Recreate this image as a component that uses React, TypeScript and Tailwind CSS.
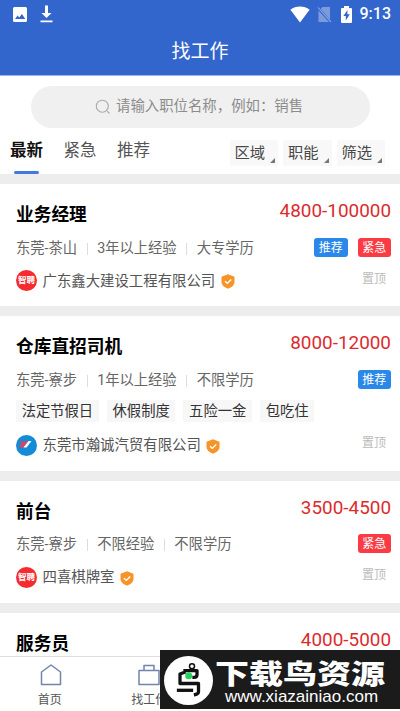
import type { ReactNode } from "react";

type Job = {
  title: string;
  salary: string;
  meta: string[];
  badges: string[];
  benefits?: string[];
  company: string;
  logo: "zhipin" | "hancheng";
};

const tabs = ["最新", "紧急", "推荐"];
const filters = ["区域", "职能", "筛选"];

const jobs: Job[] = [
  {
    title: "业务经理",
    salary: "4800-100000",
    meta: ["东莞-茶山", "3年以上经验", "大专学历"],
    badges: ["推荐", "紧急"],
    company: "广东鑫大建设工程有限公司",
    logo: "zhipin"
  },
  {
    title: "仓库直招司机",
    salary: "8000-12000",
    meta: ["东莞-寮步", "1年以上经验", "不限学历"],
    badges: ["推荐"],
    benefits: ["法定节假日", "休假制度", "五险一金", "包吃住"],
    company: "东莞市瀚诚汽贸有限公司",
    logo: "hancheng"
  },
  {
    title: "前台",
    salary: "3500-4500",
    meta: ["东莞-寮步", "不限经验", "不限学历"],
    badges: ["紧急"],
    company: "四喜棋牌室",
    logo: "zhipin"
  }
];

function StatusBar() {
  return (
    <div className="flex h-[28px] items-center justify-between pl-[13px] pr-[9px]">
      <div className="flex items-center gap-[13px]">
        <svg width="14" height="15" viewBox="0 0 14 15">
          <rect width="14" height="15" rx="1.5" fill="#fff" />
          <path d="M2 12l2.6-3.6 1.7 2L8.900 7l3.400 5z" fill="#3366cc" />
        </svg>
        <svg width="13" height="18" viewBox="0 0 13 18" fill="#fff">
          <path d="M5 .5h3V8h3.500l-5 5-5-5H5zM.5 15.500h12v1.700H.5z" />
        </svg>
      </div>
      <div className="flex items-center text-white">
        <svg width="20" height="17" viewBox="0 0 20 17">
          <path d="M10 16.500L.4 3.700C3.200 1.500 6.500.5 10 .5s6.800 1 9.600 3.200z" fill="#fff" />
        </svg>
        <svg className="ml-[7px]" width="15" height="17" viewBox="0 0 15 17">
          <path d="M5.500 1H13v12.500L3.700 3zM1.500 4.500L12 16H1.500z" fill="#7b9bdd" />
          <path d="M1 1.500l13 14.300" stroke="#8eaae2" strokeWidth="1.100" />
        </svg>
        <svg className="ml-[9px]" width="11" height="17" viewBox="0 0 11 17">
          <path d="M3 0h5v2h2q1 0 1 1v13q0 1-1 1H1q-1 0-1-1V3q0-1 1-1h2z" fill="#fff" />
          <path d="M6.400 4L2.400 10h2.400v4.500l4-6.200H6.400z" fill="#3366cc" />
        </svg>
        <span className="ml-[8px] text-[16px] font-medium leading-[20px]">9:13</span>
      </div>
    </div>
  );
}

function SearchBox() {
  return (
    <div className="ml-[31px] mr-[30px] mt-[10px] flex h-[42px] items-center rounded-full bg-[#f0f0f0] pl-[64px] text-[14.400px] text-[#8c8c8c]">
      <svg width="16" height="16" viewBox="0 0 16 16" fill="none" stroke="#aaa" strokeWidth="1.100">
        <circle cx="7.300" cy="7.200" r="6" />
        <path d="M12.200 12.200l2.300 2.300" />
      </svg>
      <span className="-mt-[1px] ml-[5px] whitespace-nowrap">请输入职位名称，例如：销售</span>
    </div>
  );
}

function FilterBar() {
  return (
    <div className="flex h-[46px] justify-between pl-[10px] pr-[15px]">
      <div className="flex gap-[20.500px] text-[16.500px] text-[#555]">
        {tabs.map((tab, index) => (
          <div key={tab} className="flex flex-col items-center">
            <span className={index === 0 ? "h-[43px] pt-[11px] leading-[24px] font-bold text-[#111]" : "h-[43px] pt-[11px] leading-[24px]"}>
              {tab}
            </span>
            {index === 0 && <span className="h-[3px] w-[25px] rounded-full bg-[#4478e0]" />}
          </div>
        ))}
      </div>
      <div className="flex gap-[5px] pt-[12px]">
        {filters.map((filter) => (
          <button key={filter} className="flex h-[26px] w-[48.500px] items-end rounded-xs bg-[#f8f8f8] pb-[3px] pl-[5px] text-[15.300px] text-[#484848]">
            <span className="h-[22px] leading-[25px]">{filter}</span>
            <svg className="ml-[5px] shrink-0" width="5" height="5" viewBox="0 0 5 5">
              <path d="M5 0v5H0z" fill="#777" />
            </svg>
          </button>
        ))}
      </div>
    </div>
  );
}

function CompanyLogo({ logo }: { logo: Job["logo"] }) {
  if (logo === "zhipin") {
    return (
      <span className="flex h-[21px] w-[21px] items-center justify-center rounded-full bg-[#f52b2f] text-[8.500px] font-bold leading-none text-white">
        智聘
      </span>
    );
  }
  return (
    <svg width="21" height="21" viewBox="0 0 21 21">
      <circle cx="10.500" cy="10.500" r="10.500" fill="#138bd6" />
      <path d="M4 5l3.500 2L12 5.500 8.500 12.500H2.500L5.500 9z" fill="#d94464" />
      <path d="M12.500 6H15.500l-5 6.500H7.500z" fill="#fff" />
    </svg>
  );
}

function VerifiedIcon() {
  return (
    <svg className="ml-[5.500px] mt-[2px]" width="14" height="15" viewBox="0 0 14 15">
      <path d="M7 .3l6.500 2.400v5.100c0 3.300-2.700 5.500-6.500 6.900C3.200 13.300.5 11.100.5 7.800V2.700z" fill="#f69429" />
      <path d="M4 7.200l2.300 2.200L10.200 5.600" fill="none" stroke="#fff" strokeWidth="1.400" />
    </svg>
  );
}

function JobHead({ title, salary }: { title: string; salary: string }) {
  return (
    <div className="flex h-[42px] justify-between">
      <h2 className="pt-[18px] text-[17.700px] font-bold leading-[26px] text-black">{title}</h2>
      <span className="pt-[14px] text-[18.900px] leading-[26px] text-[#dc2b2e]">{salary}</span>
    </div>
  );
}

function JobCard({ job }: { job: Job }) {
  return (
    <article className={job.benefits ? "h-[164.500px] shrink-0 border-b-10 border-[#ededed] pl-4 pr-[9px]" : "h-[132px] shrink-0 border-b-10 border-[#ededed] pl-4 pr-[9px]"}>
      <JobHead title={job.title} salary={job.salary} />
      <div className="flex h-[42px] items-center justify-between">
        <div className="flex items-center pt-[3px] text-[14.300px] text-[#666]">
          {job.meta.map((item, index) => (
            <span key={item} className="flex items-center whitespace-nowrap">
              {index > 0 && <i className="mx-[9.500px] h-[12px] w-px bg-[#ddd]" />}
              {item}
            </span>
          ))}
        </div>
        <div className="flex gap-[10px]">
          {job.badges.map((badge) => (
            <span
              key={badge}
              className={
                badge === "推荐"
                  ? "flex h-[19px] w-[33.500px] items-center justify-center rounded-[3px] bg-[#2a88e8] pt-px text-[12px] text-white"
                  : "flex h-[19px] w-[33.500px] items-center justify-center rounded-[3px] bg-[#fb3b44] pt-px text-[12px] text-white"
              }
            >
              {badge}
            </span>
          ))}
        </div>
      </div>
      {job.benefits && (
        <div className="flex h-[32.500px] gap-[8px] text-[14.300px] text-[#333]">
          {job.benefits.map((benefit) => (
            <span key={benefit} className="h-[22px] whitespace-nowrap bg-[#f7f7f7] px-[5.700px] leading-[22px]">
              {benefit}
            </span>
          ))}
        </div>
      )}
      <div className="flex h-[25px] items-center">
        <CompanyLogo logo={job.logo} />
        <span className="ml-[5.500px] pt-[2px] text-[14.400px] text-[#555]">{job.company}</span>
        <VerifiedIcon />
        <span className="mb-[4px] ml-auto mr-[5px] text-[12px] text-[#bbb]">置顶</span>
      </div>
    </article>
  );
}

function NavItem({ label, children }: { label: string; children: ReactNode }) {
  return (
    <div className="flex w-[99.500px] flex-col items-center pt-[6px] text-[12px] leading-[18px] text-[#555]">
      <svg width="24" height="24" viewBox="0 0 24 24" fill="none" stroke="#7384aa" strokeWidth="1.500" strokeLinejoin="round">
        {children}
      </svg>
      <span className="mt-[4px]">{label}</span>
    </div>
  );
}

function SiteBanner() {
  return (
    <div className="absolute bottom-[2px] right-0 flex h-[59px] w-[240px] items-start bg-[#1b1b1b] pl-[4px] text-white">
      <svg className="mt-[6px] shrink-0" width="49" height="49" viewBox="0 0 49 49" fill="none">
        <circle cx="24.500" cy="24.500" r="24.500" fill="#fff" />
        <circle cx="28" cy="10.300" r="2.500" stroke="#111" strokeWidth="1.500" />
        <g stroke="#111" strokeWidth="3.300" strokeLinecap="square" strokeLinejoin="round">
          <path d="M21 14.700h12v4q0 2.600-3 2.600M20 16.500l-4 1.500v9.500h18.500v8q0 2.500-3 3" />
          <path d="M14.500 34.300h13" />
        </g>
        <circle cx="24.700" cy="19.700" r="3.500" fill="#25d35d" />
      </svg>
      <div className="ml-[2px] flex flex-col pt-[11px]">
        <span className="h-[27px] w-[135px] origin-left scale-x-[1.26] whitespace-nowrap text-[27px] font-black leading-[28px]">下载鸟资源</span>
        <span className="ml-[10px] h-[18px] font-['Liberation_Sans'] text-[17px] leading-[18px]">www.xiazainiao.com</span>
      </div>
    </div>
  );
}

export default function App() {
  return (
    <main className="relative flex h-[711px] w-[400px] flex-col overflow-hidden bg-white font-[Roboto,'Noto_Sans_CJK_SC',sans-serif]">
      <header className="h-[76px] shrink-0 border-b border-[#9cb4e4] bg-[#3366cc]">
        <StatusBar />
        <h1 className="pt-[10px] text-center text-[19px] leading-[27px] text-white">找工作</h1>
      </header>
      <section className="h-[108px] shrink-0 border-b-10 border-[#ededed]">
        <SearchBox />
        <FilterBar />
      </section>
      <div className="flex min-h-0 flex-1 flex-col overflow-hidden">
        {jobs.map((job) => (
          <JobCard key={job.title} job={job} />
        ))}
        <div className="pl-4 pr-[9px]">
          <JobHead title="服务员" salary="4000-5000" />
        </div>
      </div>
      <nav className="flex h-[55px] shrink-0 border-t border-[#ddd] bg-white">
        <NavItem label="首页">
          <path d="M3.500 9L13 2l9.500 7v12.500h-19z" />
        </NavItem>
        <NavItem label="找工作">
          <path d="M2 7.500h20v14H2zM7 7.500v-5h10v5" />
        </NavItem>
      </nav>
      <SiteBanner />
    </main>
  );
}
